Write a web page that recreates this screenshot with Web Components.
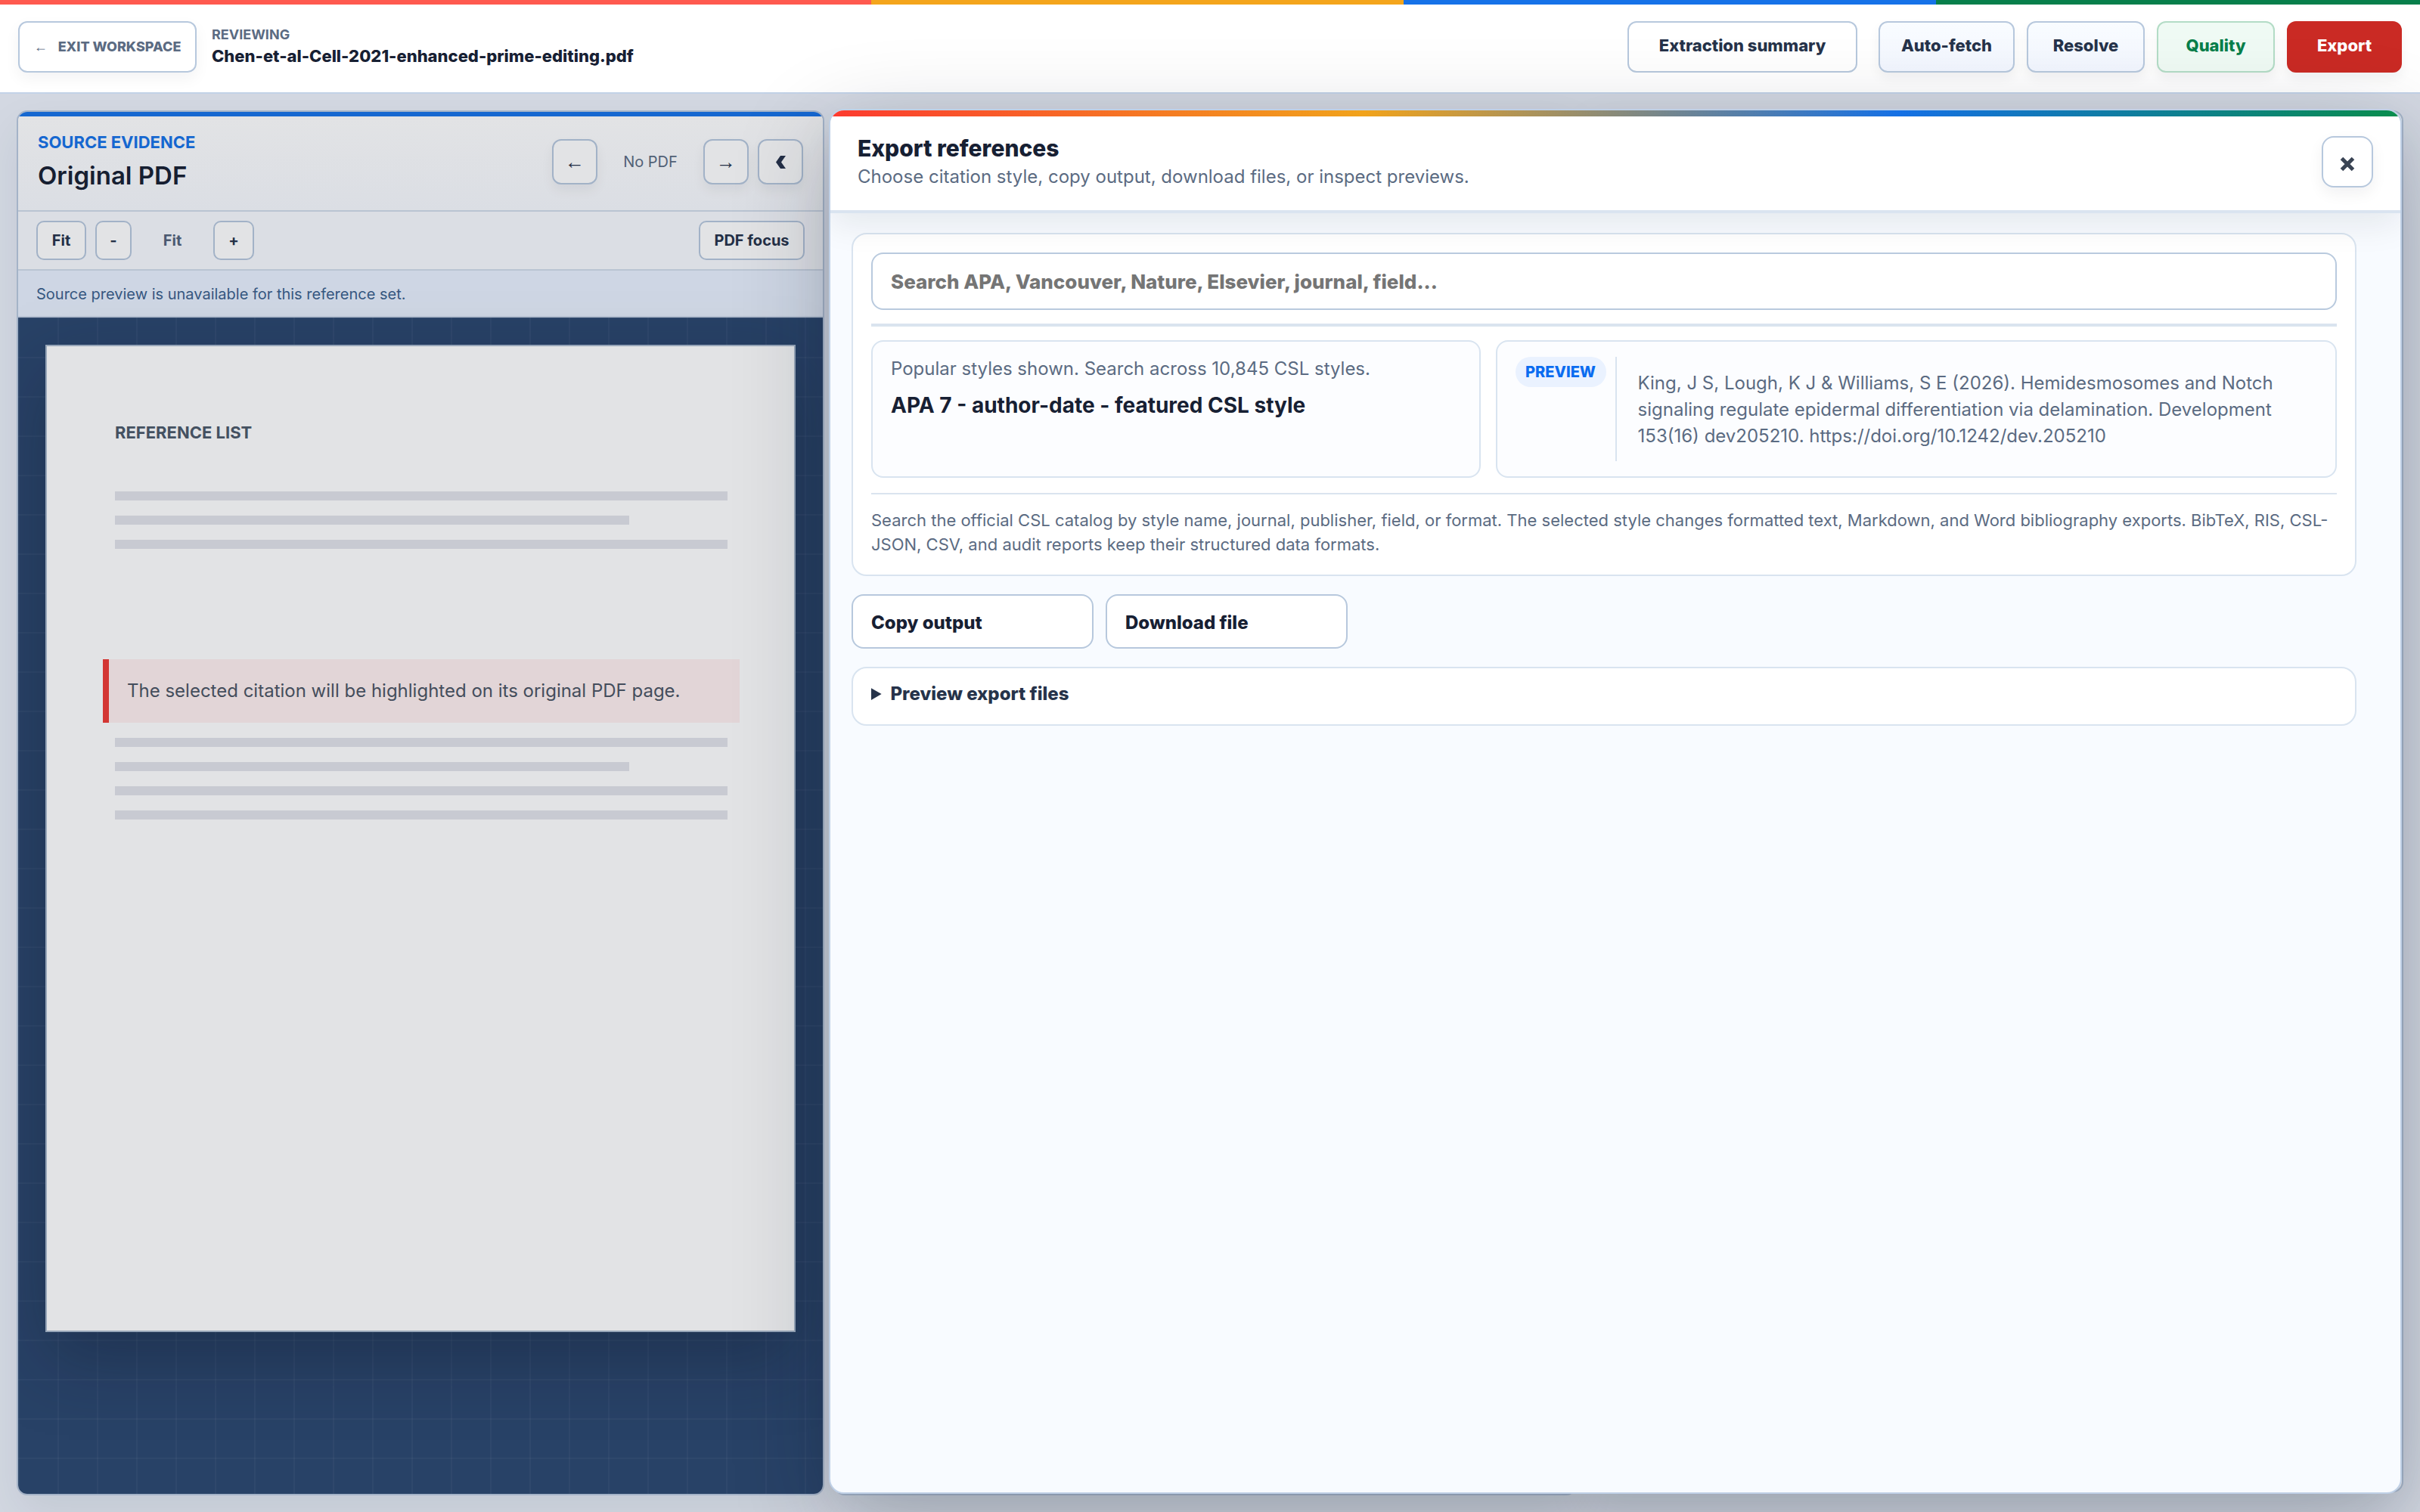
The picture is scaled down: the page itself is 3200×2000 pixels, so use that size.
<!DOCTYPE html>
<html lang="en">
<head>
<meta charset="utf-8">
<title>Reference workspace</title>
<style>
html, body { height: 100%; }
body { margin: 0; font-family: Inter, "Liberation Sans", sans-serif; color: #172033; background: #eef4fb; }
</style>
</head>
<body>
<review-app></review-app>
<script>
const define = (name, html) => {
  const template = document.createElement('template');
  template.innerHTML = '<style>*,*::before,*::after{box-sizing:border-box}</style>' + html;
  customElements.define(name, class extends HTMLElement {
    constructor() {
      super();
      this.attachShadow({ mode: 'open' }).append(template.content.cloneNode(true));
    }
  });
};

/* Push button: size and colours come from custom properties set by its parent */
define('ui-button', `
<style>
:host { display: block; flex: none; }
button {
  width: 100%; height: var(--h, 68px); padding: var(--pt, 0) var(--px, 20px) var(--pb, 0);
  display: flex; align-items: center; justify-content: var(--justify, center); gap: 14px;
  font: var(--weight, 700) var(--size, 22px)/1 var(--face, Inter), "Liberation Sans", sans-serif;
  color: var(--ink, #26334a); background: var(--fill, #fff);
  border: 2px solid var(--line, #b7c8dd); border-radius: var(--r, 12px);
  box-shadow: var(--shadow, none); white-space: nowrap;
}
</style>
<button type="button"><slot></slot></button>`);

define('top-bar', `
<style>
:host {
  display: flex; flex: none; flex-direction: column; background: #fff; border-bottom: 2px solid #c3d3e8;
}
.stripe { height: 6px; background: linear-gradient(90deg, #ff5a4f 36%, #f4a51c 36% 58%, #1672e8 58% 80%, #087f4b 80%); }
.row { display: flex; align-items: center; height: 116px; padding: 0 24px 4px; --weight: 800; }
.title { flex: 1; display: flex; flex-direction: column; gap: 2px; padding: 0 20px 2px; }
small { font-size: 18px; line-height: 24px; font-weight: 700; color: #5b6b82; }
strong { font-size: 22px; line-height: 28px; font-weight: 800; color: #172033; }
.exit { --size: 18px; --ink: #5b6b82; width: 236px; --shadow: 0 8px 20px rgba(15,23,42,.05); }
.arrow { font-family: "Liberation Sans", sans-serif; font-size: 18px; font-weight: 400; }
.summary { width: 304px; margin-right: 28px; --pb: 4px; }
.actions { display: flex; gap: 16px; --pb: 4px; }
.actions ui-button { width: 156px; --shadow: 0 8px 16px rgba(15,23,42,.05); }
.actions .fetch { width: 180px; }
.fetch, .resolve { --fill: linear-gradient(#f9fcff, #f2f6ff); }
.actions .quality { --ink: #087f4b; --fill: #effaf4; --line: #b3dcc6; }
.actions .export { width: 152px; --ink: #fff; --fill: #ca2a24; --line: #ca2a24; }
</style>
<div class="stripe"></div>
<div class="row">
  <ui-button class="exit"><span class="arrow">←</span><span>EXIT WORKSPACE</span></ui-button>
  <div class="title"><small>REVIEWING</small><strong>Chen-et-al-Cell-2021-enhanced-prime-editing.pdf</strong></div>
  <ui-button class="summary">Extraction summary</ui-button>
  <div class="actions">
    <ui-button class="fetch">Auto-fetch</ui-button>
    <ui-button class="resolve">Resolve</ui-button>
    <ui-button class="quality">Quality</ui-button>
    <ui-button class="export">Export</ui-button>
  </div>
</div>`);

define('paper-lines', `
<style>
:host { display: flex; flex-direction: column; gap: 20px; }
i { display: block; height: 12px; background: #e2e3ea; }
i:nth-of-type(2) { width: 84%; }
:host([count="3"]) i:nth-of-type(4) { display: none; }
</style>
<i></i><i></i><i></i><i></i>`);

define('source-panel', `
<style>
:host {
  display: flex; flex-direction: column; overflow: hidden; background: #fff;
  border: 2px solid #b9c9df; border-radius: 14px; box-shadow: 0 24px 60px rgba(15,23,42,.08);
}
header {
  display: flex; align-items: center; justify-content: space-between; height: 132px;
  border-top: 6px solid #1672e8; border-bottom: 2px solid #d1dcea; padding: 0 26px 4px;
  background: linear-gradient(#fff, #f8fafe);
}
small { display: block; font-size: 22px; line-height: 28px; font-weight: 700; color: #1672e8; }
h2 { margin: 8px 0 0; font-size: 33px; line-height: 44px; font-weight: 600; color: #172033; }
.pager { display: flex; align-items: center; gap: 12px; }
.pager ui-button { width: 60px; --h: 60px; --px: 0; --size: 26px; --weight: 400; --face: "Liberation Sans"; --ink: #26334a; --shadow: 0 8px 16px rgba(15,23,42,.06); }
.pager span { width: 116px; text-align: center; font-size: 20px; color: #5b6b82; }
.pager svg { display: block; }
.tools { display: flex; align-items: center; height: 78px; padding: 0 24px; gap: 12px; background: #f8fafe; border-bottom: 2px solid #d1dcea; --h: 52px; --size: 20px; --px: 0; --r: 10px; }
.fit { width: 66px; } .minus { width: 48px; } .plus { width: 54px; } .focus { width: 140px; margin-left: auto; }
.tools span { width: 84px; text-align: center; font-size: 20px; font-weight: 700; color: #52627a; }
.notice { margin: 0; height: 62px; padding: 0 24px; font-size: 20px; line-height: 62px; color: #3c618d; background: #e9f1fe; border-bottom: 2px solid #cfdbec; }
.desk {
  flex: 1; padding: 36px; background-color: #2c4870;
  background-image: linear-gradient(rgba(255,255,255,.04) 2px, transparent 2px), linear-gradient(90deg, rgba(255,255,255,.04) 2px, transparent 2px);
  background-size: 52px 52px;
}
.paper { aspect-ratio: 496 / 653; padding: 98px 88px 0 90px; background: #fff; border: 2px solid #a9b9cc; box-shadow: 0 36px 88px rgba(15,23,42,.34); }
h3 { margin: 0 0 62px; font-size: 22px; line-height: 32px; font-weight: 700; color: #4c5969; }
.hit { margin: 146px -16px 20px; padding: 0 24px; border-left: 8px solid #ee3b35; background: #fff0f0; font-size: 24px; line-height: 84px; color: #4c5563; }
</style>
<header>
  <div><small>SOURCE EVIDENCE</small><h2>Original PDF</h2></div>
  <div class="pager">
    <ui-button>←</ui-button><span>No PDF</span><ui-button>→</ui-button>
    <ui-button><svg width="13" height="17" viewBox="0 0 13 17"><path d="M6 0H13L7 8.500L13 17H6L0 8.500Z" fill="#26334a"/></svg></ui-button>
  </div>
</header>
<div class="tools">
  <ui-button class="fit">Fit</ui-button><ui-button class="minus">-</ui-button><span>Fit</span><ui-button class="plus">+</ui-button>
  <ui-button class="focus">PDF focus</ui-button>
</div>
<p class="notice">Source preview is unavailable for this reference set.</p>
<div class="desk"><div class="paper">
  <h3>REFERENCE LIST</h3>
  <paper-lines count="3"></paper-lines>
  <p class="hit">The selected citation will be highlighted on its original PDF page.</p>
  <paper-lines></paper-lines>
</div></div>`);

define('style-picker', `
<style>
:host { display: flex; flex-direction: column; padding: 24px; background: #fff; border: 2px solid #d9e4f0; border-radius: 20px; }
input {
  width: 100%; height: 76px; padding: 0 24px; border: 2px solid #b9cade; border-radius: 16px; background: #fff;
  font: 800 26px/1.2 Inter, "Liberation Sans", sans-serif; color: #172033;
}
input::placeholder { color: #757575; opacity: 1; }
hr { width: 100%; margin: 18px 0; border: 0; height: 4px; background: #dae4ef; }
hr.thin { margin: 20px 0 18px; height: 2px; }
.cols { display: grid; grid-template-columns: 21fr 29fr; gap: 20px; }
.box { min-height: 182px; padding: 20px 24px; background: #fcfdff; border: 2px solid #d9e4f0; border-radius: 16px; }
p { margin: 0; color: #5b6b82; font-size: 24px; line-height: 32px; }
.box strong { display: block; margin-top: 12px; font-size: 28px; line-height: 40px; font-weight: 700; color: #172033; }
.preview { display: flex; align-items: stretch; }
.pill { align-self: flex-start; width: 120px; height: 40px; border-radius: 20px; background: #eaf2ff; color: #0a6cf0; font-size: 20px; line-height: 40px; font-weight: 800; text-align: center; }
.cite { flex: 1; display: flex; align-items: center; margin-left: 12px; padding-left: 28px; border-left: 2px solid #d9e4f0; }
.cite p { line-height: 35px; }
.note { font-size: 22px; line-height: 32px; }
</style>
<input type="search" aria-label="Search citation styles" placeholder="Search APA, Vancouver, Nature, Elsevier, journal, field...">
<hr>
<div class="cols">
  <div class="box"><p>Popular styles shown. Search across 10,845 CSL styles.</p><strong>APA 7 - author-date - featured CSL style</strong></div>
  <div class="box preview"><span class="pill">PREVIEW</span><div class="cite"><p>King, J S, Lough, K J &amp; Williams, S E (2026). Hemidesmosomes and Notch signaling regulate epidermal differentiation via delamination. Development 153(16) dev205210. https://doi.org/10.1242/dev.205210</p></div></div>
</div>
<hr class="thin">
<p class="note">Search the official CSL catalog by style name, journal, publisher, field, or format. The selected style changes formatted text, Markdown, and Word bibliography exports. BibTeX, RIS, CSL-JSON, CSV, and audit reports keep their structured data formats.</p>`);

define('export-drawer', `
<style>
:host {
  display: flex; flex-direction: column; overflow: hidden; background: #f8fbff;
  border: 2px solid #bfd0e6; border-radius: 20px; box-shadow: 0 36px 128px rgba(15,23,42,.24);
}
.bar { height: 8px; flex: none; background: linear-gradient(90deg, #ff3b30, #f4a51c 34%, #1672e8 68%, #0a8f4e); }
header {
  position: relative; display: flex; align-items: center; justify-content: space-between; flex: none; height: 128px;
  padding: 0 36px 4px; background: #fff; border-bottom: 4px solid #dae4f0; box-shadow: 0 16px 44px rgba(15,23,42,.08);
}
h1 { margin: 0; font-size: 30px; line-height: 40px; font-weight: 800; color: #172033; }
header p { margin: 0; font-size: 24px; line-height: 36px; color: #5b6b82; }
.close { width: 68px; --px: 0; --pt: 6px; --r: 16px; --shadow: 0 8px 20px rgba(15,23,42,.06); }
main { display: flex; flex-direction: column; gap: 24px; padding: 26px 58px 28px 28px; }
.row { display: flex; gap: 16px; }
.row ui-button { width: 320px; --h: 72px; --size: 24px; --weight: 800; --justify: flex-start; --px: 24px; --pt: 4px; --r: 16px; --ink: #172033; }
details { padding: 20px 24px; height: 78px; background: #fff; border: 2px solid #d9e4f0; border-radius: 20px; }
summary { font-size: 24px; line-height: 28px; font-weight: 800; color: #26334a; }
</style>
<div class="bar"></div>
<header>
  <div><h1>Export references</h1><p>Choose citation style, copy output, download files, or inspect previews.</p></div>
  <ui-button class="close"><svg width="20" height="20" viewBox="0 0 20 20" stroke="#3a4454" stroke-width="5"><path d="M2.500 2.500L17.500 17.500M17.500 2.500L2.500 17.500"/></svg></ui-button>
</header>
<main>
  <style-picker></style-picker>
  <div class="row"><ui-button>Copy output</ui-button><ui-button>Download file</ui-button></div>
  <details><summary>Preview export files</summary></details>
</main>`);

define('review-app', `
<style>
:host { display: flex; flex-direction: column; height: 100vh; overflow: hidden; }
.work { position: relative; flex: 1; min-height: 0; display: grid; grid-template-columns: 1068fr 982fr 1080fr; gap: 13px; padding: 22px; background: #eef3fc; }
.pane { background: #fff; border: 2px solid #b9c9df; border-radius: 14px; box-shadow: 0 24px 60px rgba(15,23,42,.08); }
.last { margin-bottom: 4px; }
.shade { position: absolute; inset: 0; background: rgba(15,23,42,.12); }
export-drawer { position: absolute; top: 20px; right: 24px; bottom: 24px; width: 65%; }
</style>
<top-bar></top-bar>
<div class="work">
  <source-panel></source-panel>
  <div class="pane"></div>
  <div class="pane last"></div>
  <div class="shade"></div>
  <export-drawer></export-drawer>
</div>`);
</script>
</body>
</html>
